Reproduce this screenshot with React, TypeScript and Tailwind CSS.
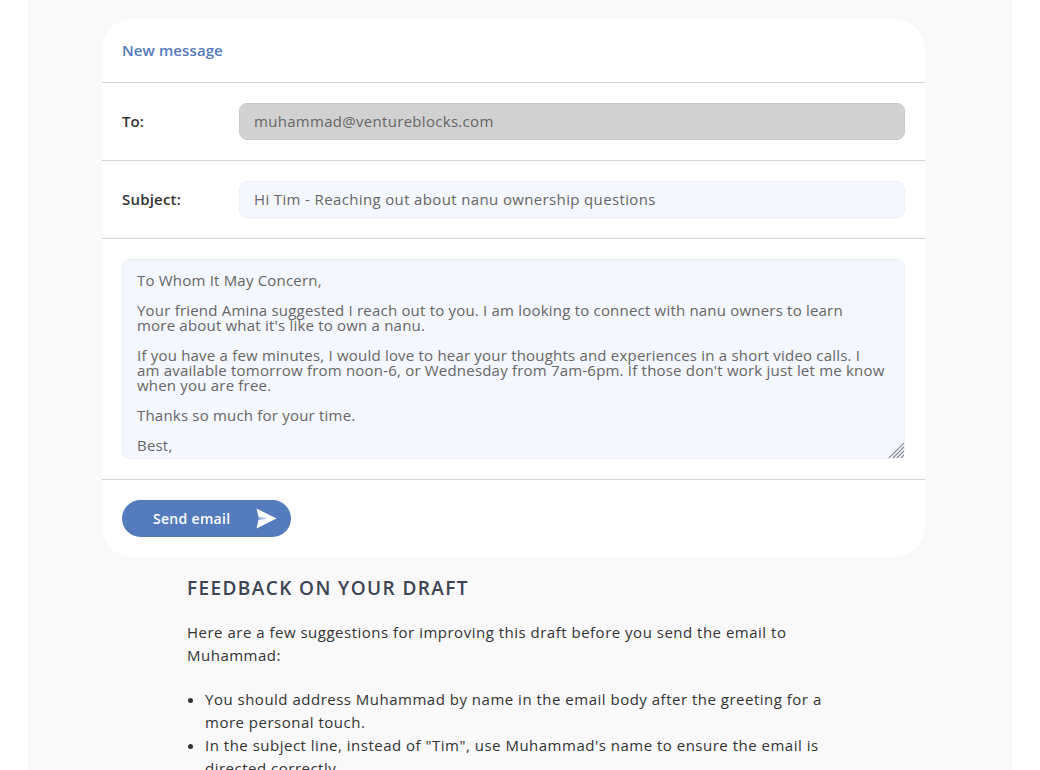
const font = "font-['Open_Sans',sans-serif]";

const draft = `To Whom It May Concern,

Your friend Amina suggested I reach out to you. I am looking to connect with nanu owners to learn
more about what it's like to own a nanu.

If you have a few minutes, I would love to hear your thoughts and experiences in a short video calls. I
am available tomorrow from noon-6, or Wednesday from 7am-6pm. If those don't work just let me know
when you are free.

Thanks so much for your time.

Best,`;

const SendIcon = () => (
  <svg width="21" height="21" viewBox="0 0 21 21" className="shrink-0">
    <path d="M0.5 0.5 L20.5 10.5 L0.5 20.5 L2.5 12 L11 10.5 L2.5 9 Z" fill="#fff" />
    <path d="M2.5 9 L11 10.5 L2.5 12 Z" fill="#fff" fillOpacity="0.45" />
  </svg>
);

// the hatched drag corner of the message box
const ResizeGrip = () => (
  <svg width="15" height="15" viewBox="0 0 15 15" className="pointer-events-none absolute bottom-[1px] right-[1px]">
    <g stroke="#7f7f86" strokeWidth="1.1">
      <path d="M0 15 L15 0" />
      <path d="M4 15 L15 4" />
      <path d="M8 15 L15 8" />
      <path d="M12 15 L15 12" />
    </g>
  </svg>
);

const App = () => {
  return (
    <div className={`h-screen overflow-hidden bg-white ${font}`}>
      <div className="mx-auto h-full w-[984px] bg-[#f9f9f9] px-[74px] pt-[19px]">
        <div className="w-[823px] rounded-[30px] bg-white">
          <div className="flex h-[64px] items-center border-b border-[#d4d4d4] px-5">
            <h1 className="text-[15px] font-semibold tracking-[0.1px] text-[#5479bd]">New message</h1>
          </div>

          <div className="flex h-[78px] items-center border-b border-[#d4d4d4] px-5">
            <label className="w-[117px] text-[15px] font-semibold text-[#333]">To:</label>
            <input
              readOnly
              value="muhammad@ventureblocks.com"
              className="h-[37px] flex-1 rounded-lg border border-[#c8c8c8] bg-[#d1d1d1] px-[14px] pb-[2px] text-[15px] tracking-[0.3px] text-[#666] outline-none"
            />
          </div>

          <div className="flex h-[78px] items-center border-b border-[#d4d4d4] px-5">
            <label className="w-[117px] text-[15px] font-semibold tracking-[0.2px] text-[#333]">Subject:</label>
            <input
              readOnly
              value="Hi Tim - Reaching out about nanu ownership questions"
              className="h-[37px] flex-1 rounded-lg border border-[#e9eef8] bg-[#f4f7fe] px-[14px] pb-[2px] text-[15px] tracking-[0.36px] text-[#666] outline-none"
            />
          </div>

          <div className="border-b border-[#d4d4d4] p-5">
            <div className="relative">
              <textarea
                readOnly
                wrap="off"
                value={draft}
                className="block h-[200px] w-full resize-none overflow-hidden rounded-lg border border-[#e9eef8] bg-[#f4f7fe] px-[14px] pt-[13px] text-[15px] leading-[15px] tracking-[0.2px] text-[#666] outline-none"
              />
              <ResizeGrip />
            </div>
          </div>

          <div className="p-5">
            <button className="flex h-[37px] w-[169px] items-center justify-between rounded-full bg-[#547bbc] pl-[31px] pr-[14px] text-[14px] font-semibold tracking-[0.3px] text-white">
              Send email
              <SendIcon />
            </button>
          </div>
        </div>

        <div className="w-[748px] pl-[85px] pt-[18px] text-[15px] leading-[23px] tracking-[0.5px] text-[#333]">
          <h2 className="text-[19px] font-semibold leading-[26px] tracking-[1.4px] text-[#3d4454]">FEEDBACK ON YOUR DRAFT</h2>
          <p className="mt-[20px]">
            Here are a few suggestions for improving this draft before you send the email to Muhammad:
          </p>
          <ul className="mt-[21px] list-disc pl-[18px]">
            <li>You should address Muhammad by name in the email body after the greeting for a more personal touch.</li>
            <li>In the subject line, instead of "Tim", use Muhammad's name to ensure the email is directed correctly.</li>
          </ul>
        </div>
      </div>
    </div>
  );
};

export default App;
